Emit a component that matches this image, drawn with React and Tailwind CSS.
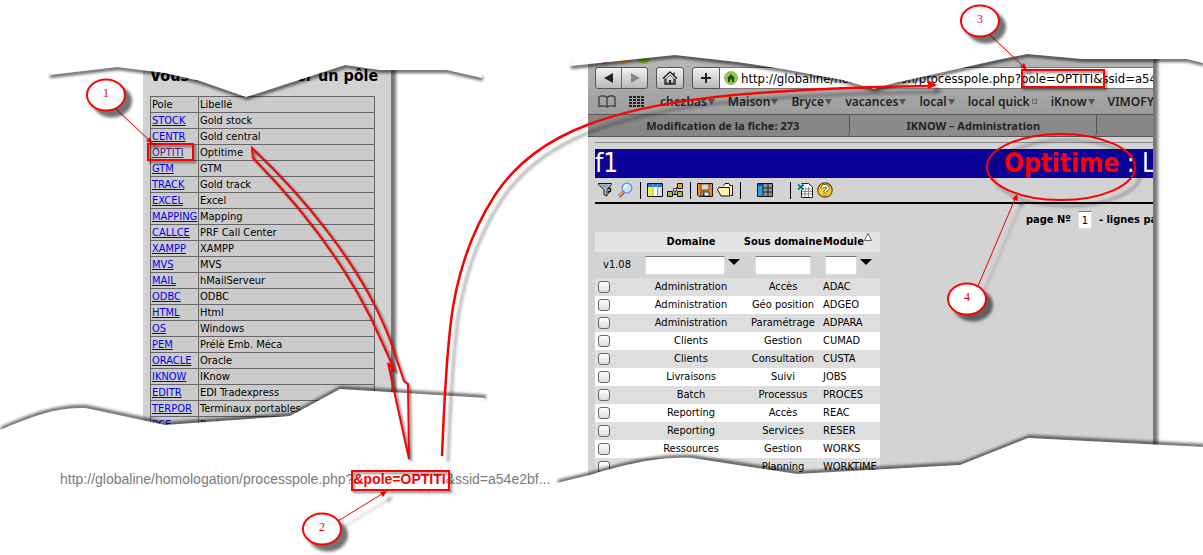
import React from 'react';

const poles = [
  ['STOCK', 'Gold stock'],
  ['CENTR', 'Gold central'],
  ['OPTITI', 'Optitime'],
  ['GTM', 'GTM'],
  ['TRACK', 'Gold track'],
  ['EXCEL', 'Excel'],
  ['MAPPING', 'Mapping'],
  ['CALLCE', 'PRF Call Center'],
  ['XAMPP', 'XAMPP'],
  ['MVS', 'MVS'],
  ['MAIL', 'hMailServeur'],
  ['ODBC', 'ODBC'],
  ['HTML', 'Html'],
  ['OS', 'Windows'],
  ['PEM', 'Prélè Emb. Méca'],
  ['ORACLE', 'Oracle'],
  ['IKNOW', 'IKnow'],
  ['EDITR', 'EDI Tradexpress'],
  ['TERPOR', 'Terminaux portables'],
  ['PCE', 'Projection'],
];

const modules = [
  ['Administration', 'Accès', 'ADAC'],
  ['Administration', 'Géo position', 'ADGEO'],
  ['Administration', 'Paramétrage', 'ADPARA'],
  ['Clients', 'Gestion', 'CUMAD'],
  ['Clients', 'Consultation', 'CUSTA'],
  ['Livraisons', 'Suivi', 'JOBS'],
  ['Batch', 'Processus', 'PROCES'],
  ['Reporting', 'Accès', 'REAC'],
  ['Reporting', 'Services', 'RESER'],
  ['Ressources', 'Gestion', 'WORKS'],
  ['Ressources', 'Planning', 'WORKTIME'],
];

const bookmarks = ['chezbas', 'Maison', 'Bryce', 'vacances', 'local', 'local quick', 'iKnow', 'VIMOFY'];

function PolePanel() {
  return (
    <section className="h-[380px] overflow-hidden bg-[#d2d2d2] px-[7px] shadow-[5px_5px_3px_#777] font-['DejaVu_Sans_Condensed','DejaVu_Sans',sans-serif]">
      <h1 className="pt-2 text-base leading-6 font-bold whitespace-nowrap text-black">Vous allez consulter un pôle</h1>
      <table className="mt-2 w-[225px] table-fixed border-collapse bg-[#cbcbcb] text-[11px] leading-[15px] text-black">
        <colgroup>
          <col className="w-12" />
          <col />
        </colgroup>
        <thead>
          <tr>
            <th className="border border-[#666] p-0 pl-px text-left font-normal">Pole</th>
            <th className="border border-[#666] p-0 pl-px text-left font-normal">Libellé</th>
          </tr>
        </thead>
        <tbody>
          {poles.map(([code, label]) => (
            <tr key={code}>
              <td className="border border-[#666] p-0 pl-px">
                <a href="#" className={code === 'OPTITI' ? 'text-[#551a8b] underline' : 'text-[#0000ee] underline'}>{code}</a>
              </td>
              <td className="border border-[#666] p-0 pl-px">{label}</td>
            </tr>
          ))}
        </tbody>
      </table>
    </section>
  );
}

function BrowserBar() {
  return (
    <header className="bg-gradient-to-b from-[#bcbcbc] to-[#929292] font-['Noto_Sans',sans-serif]">
      <div className="flex h-[19px] items-center gap-2 pl-[10px]">
        <i className="size-3 rounded-full bg-[#d9433b]" />
        <i className="size-3 rounded-full bg-[#e8a33d]" />
        <i className="size-3 rounded-full bg-[#7fb335]" />
      </div>
      <div className="flex h-[22px] pl-[7px]">
        <div className="flex w-[53px] rounded-[3px] border border-[#555] bg-gradient-to-b from-[#f4f4f4] to-[#b9b9b9]">
          <button aria-label="Précédent" className="flex flex-1 items-center justify-center border-r border-[#666]">
            <svg width="10" height="10" viewBox="0 0 10 10"><path d="M9 0v10L0 5z" fill="#222" /></svg>
          </button>
          <button aria-label="Suivant" className="flex flex-1 items-center justify-center">
            <svg width="10" height="10" viewBox="0 0 10 10"><path d="M1 0v10l9-5z" fill="#888" /></svg>
          </button>
        </div>
        <button aria-label="Accueil" className="ml-2 flex w-7 items-center justify-center rounded-[3px] border border-[#555] bg-gradient-to-b from-[#f4f4f4] to-[#b9b9b9]">
          <svg width="16" height="16" viewBox="0 0 16 16" fill="none" stroke="#222" strokeWidth="1.4">
            <path d="M1 8.5 8 2l7 6.500M3 8.500V14h10V8.500M12 5V2.500" />
            <path d="M8 5 4.500 8.500V13h7V8.500z" strokeWidth=".6" />
            <path d="M7 10h2v4H7z" fill="#222" stroke="none" />
          </svg>
        </button>
        <button aria-label="Ajouter" className="ml-2 flex w-7 items-center justify-center rounded-l-[3px] border border-[#555] bg-gradient-to-b from-[#f4f4f4] to-[#b9b9b9]">
          <svg width="12" height="12" viewBox="0 0 12 12"><path d="M1 6h10M6 1v10" stroke="#222" strokeWidth="2" /></svg>
        </button>
        <label className="flex min-w-0 flex-1 items-center border-y border-[#777] bg-white pl-1">
          <svg className="shrink-0" width="14" height="14" viewBox="0 0 14 14">
            <circle cx="7" cy="7" r="6.500" fill="#8fc84a" stroke="#6ba12c" strokeWidth=".6" />
            <path d="m3 7.200 4-4 4 4H10V11H8V8.500H6V11H4V7.200z" fill="#24460c" />
          </svg>
          <input
            aria-label="Adresse"
            className="ml-[3px] h-5 min-w-0 flex-1 bg-transparent text-[13px] text-black outline-none font-['DejaVu_Sans_Condensed','DejaVu_Sans',sans-serif]"
            defaultValue="http://globaline/homologation/processpole.php?pole=OPTITI&ssid=a54e2bf"
          />
        </label>
      </div>
      <nav className="flex h-[25px] items-center overflow-hidden pl-[10px] text-[12px] leading-[25px] font-semibold whitespace-nowrap text-[#222]">
        <svg className="mr-[13px] shrink-0" width="18" height="13" viewBox="0 0 18 13" fill="none" stroke="#333" strokeWidth="1.200">
          <path d="M9 12V2.500C7.500.500 3 .500 1 2v9.500c2-1 6.500-1 8 .500 1.500-1.500 6-1.500 8-.5V2c-2-1.500-6.500-1.500-8 .500" />
        </svg>
        <svg className="mr-[15px] shrink-0" width="16" height="12" viewBox="0 0 16 12" fill="#222">
          {[0, 3, 6, 9].map((y) => [0, 4, 8, 12].map((x) => <rect key={`${x}-${y}`} x={x} y={y} width="3" height="2" />))}
        </svg>
        <div className="flex gap-[13px]">
          {bookmarks.map((b) => (
            <a key={b} href="#" className="flex items-center gap-px">
              {b}
              {b === 'VIMOFY' ? null : b === 'local quick' ? (
                <svg width="7" height="7" viewBox="0 0 7 7"><path d="M1.500 1.500h4v4h-4z" fill="none" stroke="#666" /></svg>
              ) : (
                <svg width="7" height="6" viewBox="0 0 7 6"><path d="M0 0h7L3.500 6z" fill="#555" /></svg>
              )}
            </a>
          ))}
        </div>
      </nav>
      <nav className="flex h-[23px] border-y border-[#555] bg-[#868686] text-[11px] leading-[21px] font-bold whitespace-nowrap text-[#222]">
        <a href="#" className="flex-[258] rounded-br border-r border-[#555] pl-2 text-center">Modification de la fiche: 273</a>
        <a href="#" className="flex-[250] rounded-br border-r border-[#555] bg-[#8b8b8b] text-center">IKNOW – Administration</a>
        <span className="flex-[57]" />
      </nav>
    </header>
  );
}

function Tool({ label, children }) {
  return (
    <button aria-label={label} className="flex w-5 items-center justify-center">
      <svg width="16" height="16" viewBox="0 0 16 16">{children}</svg>
    </button>
  );
}

function Sep() {
  return (
    <span className="flex w-[10px] justify-center">
      <i className="h-[17px] w-px bg-black" />
    </span>
  );
}

function Toolbar() {
  return (
    <div className="flex h-[26px] items-center border-b-2 border-black">
      <Tool label="Filtre">
        <path d="M1.500 1.500h13v1L10 7.500V14l-3-1.500v-5l-5.500-5z" fill="#bcc6cf" stroke="#111" />
        <path d="M2.500 2.500h10L8.500 6z" fill="#8ba0b5" />
        <path d="M10.500 6.500h3v3h-2v2" fill="#ddd" stroke="#111" strokeWidth="1.300" />
      </Tool>
      <Tool label="Rechercher">
        <path d="m2 14.500 5-5" stroke="#8b542a" strokeWidth="3.600" />
        <path d="m1.800 14 5-5" stroke="#eda56a" strokeWidth="1.800" />
        <circle cx="10" cy="6" r="4.900" fill="#b8e6fb" stroke="#6d91c5" strokeWidth="1.300" />
        <path d="M7.500 6a3 3 0 0 1 3-2.800" stroke="#fff" strokeWidth="1.600" fill="none" />
      </Tool>
      <Sep />
      <Tool label="Colonnes">
        <path d="M.5 1.500h15v13H.5z" fill="#fff" stroke="#111" />
        <path d="M1 2h14v3H1z" fill="#2b7bc8" />
        <path d="M1 5h5v9H1z" fill="#ffec3a" />
        <path d="M11 5h4v9h-4z" fill="#cfe4ee" />
        <path d="M6 2v12M10.500 2v12" stroke="#8aa" />
      </Tool>
      <Tool label="Hiérarchie">
        <path d="M5 12.500h6M8 12.500V8l3-4" stroke="#111" fill="none" />
        <path d="M10.500 1.500h5v5h-5z" fill="#e6a327" stroke="#111" />
        <path d="M.5 9.500h5v5h-5zM10.500 9.500h5v5h-5z" fill="#a9bd45" stroke="#111" />
        <path d="M6.500 6.500h3v2.500h-3z" fill="#f4f4d0" stroke="#111" strokeWidth=".7" />
      </Tool>
      <Sep />
      <Tool label="Enregistrer">
        <path d="M.5 1.500h15v13H2l-1.500-1.500z" fill="#e58c1c" stroke="#111" />
        <path d="M4 2h8v6H4z" fill="#d9d3e8" stroke="#5a2b10" strokeWidth=".8" />
        <path d="M4 10h8v4H4z" fill="#eee" stroke="#111" strokeWidth=".8" />
        <path d="M5.500 10.500h2V14h-2z" fill="#333" />
      </Tool>
      <Tool label="Ouvrir">
        <path d="M6.500 3.500 8 1.500h4l1 2h2.500v10h-2" fill="#fff6c2" stroke="#111" />
        <path d="M.5 7.500 2 5.500h10.500v8.500H4z" fill="#fff2b0" stroke="#111" />
      </Tool>
      <Sep />
      <span className="w-[10px]" />
      <Tool label="Grille">
        <path d="M.5 1.500h15v13H.5z" fill="#8b9298" stroke="#111" />
        <path d="M1 2h5v12H1z" fill="#2da0e8" />
        <path d="M1 2h5v2H1z" fill="#0d5fae" />
        <path d="M6 2v12M11 2v12M6 6h9M6 10h9" stroke="#222" />
      </Tool>
      <span className="w-[10px]" />
      <Sep />
      <Tool label="Exporter">
        <path d="M4.500 1.500h7l4 3.500v10.500h-11z" fill="#fff" stroke="#222" />
        <path d="M5 7h10M5 9.500h10M5 12h10M8 5v10M11.500 5v10" stroke="#888" />
        <path d="M0 2h8v6H0z" fill="#d8f0f0" />
        <path d="m1 2.500 5.500 5M6.500 2.500l-5.500 5" stroke="#087680" strokeWidth="2" />
      </Tool>
      <Tool label="Aide">
        <circle cx="8" cy="8" r="7.200" fill="#ffd21c" stroke="#6b4300" strokeWidth="1.200" />
        <path d="M5 6.500C5 3 11 3 11 6.200 11 8.200 8 8 8 10.300" fill="none" stroke="#333" strokeWidth="3.200" />
        <path d="M5 6.500C5 3 11 3 11 6.200 11 8.200 8 8 8 10.300" fill="none" stroke="#fff" strokeWidth="1.800" />
        <circle cx="8" cy="12.500" r="1.300" fill="#fff" stroke="#333" strokeWidth=".6" />
      </Tool>
    </div>
  );
}

function FilterBox({ label, wide }) {
  return (
    <input
      aria-label={label}
      className={
        'h-[19px] border border-[#ddd] border-t-[#777] bg-white px-1 outline-none ' + wide
      }
    />
  );
}

function Caret() {
  return (
    <svg width="12" height="6" viewBox="0 0 12 6" className="mb-[6px]"><path d="M0 0h12L6 6z" fill="#000" /></svg>
  );
}

function ModuleTable() {
  return (
    <table className="w-[285px] table-fixed border-collapse text-center text-[11px] leading-[18px] text-black">
      <colgroup>
        <col className="w-11" />
        <col className="w-[104px]" />
        <col className="w-20" />
        <col className="w-[57px]" />
      </colgroup>
      <thead>
        <tr className="h-5 bg-[#e4e4e4] whitespace-nowrap">
          <th className="p-0" />
          <th className="p-0">Domaine</th>
          <th className="p-0">Sous domaine</th>
          <th className="p-0 text-left">
            <span className="flex">
              Module
              <svg width="8" height="8" viewBox="0 0 8 8"><path d="M.5 7.500h7L4 .500z" fill="#fff" stroke="#444" strokeWidth=".8" /></svg>
            </span>
          </th>
        </tr>
        <tr className="h-[26px]">
          <td className="p-0">v1.08</td>
          <td className="p-0"><span className="flex items-center gap-[3px] pl-[6px]"><FilterBox label="Filtre domaine" wide="w-20" /><Caret /></span></td>
          <td className="p-0"><span className="flex justify-center"><FilterBox label="Filtre sous domaine" wide="w-14" /></span></td>
          <td className="p-0"><span className="flex items-center gap-[3px] pl-[2px]"><FilterBox label="Filtre module" wide="w-8" /><Caret /></span></td>
        </tr>
      </thead>
      <tbody>
        {modules.map((m) => (
          <tr key={m[2]} className="h-[18px] odd:bg-[#dedede] even:bg-white">
            <td className="p-0">
              <input
                type="checkbox"
                aria-label={m[2]}
                className="ml-[3px] block size-3 appearance-none rounded-[3px] border border-[#666] bg-gradient-to-b from-[#fff] to-[#dcdcdc]"
              />
            </td>
            <td className="p-0">{m[0]}</td>
            <td className="p-0">{m[1]}</td>
            <td className="p-0 text-left">{m[2]}</td>
          </tr>
        ))}
      </tbody>
    </table>
  );
}

function BrowserPanel() {
  return (
    <section className="h-[440px] overflow-hidden bg-[#d3d3d3] shadow-[5px_5px_3px_#777]">
      <BrowserBar />
      <div className="pt-[5px] pl-[7px] font-['DejaVu_Sans_Condensed','DejaVu_Sans',sans-serif]">
        <hr className="border-t border-[#888]" />
        <div className="mt-[6px] flex h-[29px] justify-between overflow-hidden bg-[#0b0097] text-[26px] leading-[29px] whitespace-nowrap text-white">
          <span>f1</span>
          <h2 className="w-[149px]"><b className="text-[#f00]">Optitime</b> : Liste</h2>
        </div>
        <Toolbar />
        <div className="flex h-7 justify-end overflow-hidden pt-1 text-[11px] font-bold text-black">
          <label className="flex w-[127px] items-center whitespace-nowrap">
            page Nº
            <input className="mx-[7px] h-[18px] w-[14px] shrink-0 border border-t-[#777] border-[#ddd] bg-white text-center font-normal" defaultValue="1" />
            - lignes par page
          </label>
        </div>
        <ModuleTable />
      </div>
    </section>
  );
}

const tears = [
  { edge: 'M49 75 L117 67 L165 73 L200 81 L246 97 L345 65 L380 70 L447 70 L482 78', rest: ' Q475 20 420 20 L90 20 Z', dy: 1 },
  { edge: 'M570 66 L675 55 L737 62 L783 69 L843 80 L874 89 L890 84 L997 60 L1027 54 L1082 59 L1187 59 L1203 63', rest: ' V20 H610 Z', dy: 1 },
  { edge: 'M0 430 C30 417 55 407 85 408 L165 425 L290 416 L340 389 L485 398', rest: ' L450 450 H0 Z', dy: -1 },
  { edge: 'M557 483 L590 475 C640 460 665 457 692 458 L750 467 L797 474 L960 465 L1028 438 L1203 447', rest: ' V520 H570 Z', dy: -1 },
];

function TornPaper() {
  return (
    <svg className="pointer-events-none absolute top-0 left-0 z-10" width="1203" height="555" viewBox="0 0 1203 555" aria-hidden="true">
      <defs>
        <filter id="soft" x="-5%" y="-60%" width="110%" height="220%"><feGaussianBlur stdDeviation="1.500" /></filter>
      </defs>
      {tears.map((t) => (
        <g key={t.edge}>
          <path d={t.edge} transform={`translate(1 ${t.dy})`} fill="none" stroke="#000" strokeOpacity=".6" strokeWidth="4" filter="url(#soft)" />
          <path d={t.edge + t.rest} fill="#fff" />
        </g>
      ))}
    </svg>
  );
}

const callouts = [
  { n: 1, x: 106, y: 95, line: 'M116 109 L149 140', tip: 'M153 144 l-7 -3 l4 -4z' },
  { n: 2, x: 322, y: 529, line: 'M338 521 L382 494', tip: 'M387 491 l-4 6 l-3 -5z' },
  { n: 3, x: 980, y: 21, line: 'M990 35 L1023 66', tip: 'M1027 70 l-7 -3 l4 -4z' },
  { n: 4, x: 967, y: 299, line: 'M978 286 L1015 199', tip: 'M1017 194 l1 7 l-6 -2z' },
];

function Annotations() {
  return (
    <svg className="pointer-events-none absolute top-0 left-0 z-30" width="1203" height="555" viewBox="0 0 1203 555">
      <defs>
        <filter id="far" filterUnits="userSpaceOnUse" x="0" y="0" width="1203" height="555" colorInterpolationFilters="sRGB">
          <feDropShadow dx="6" dy="6" stdDeviation="1.500" floodColor="#000" floodOpacity=".35" />
        </filter>
        <filter id="deep" filterUnits="userSpaceOnUse" x="0" y="0" width="1203" height="555" colorInterpolationFilters="sRGB">
          <feDropShadow dx="6" dy="6" stdDeviation="1.500" floodColor="#000" floodOpacity=".55" />
        </filter>
        <filter id="near" filterUnits="userSpaceOnUse" x="0" y="0" width="1203" height="555" colorInterpolationFilters="sRGB">
          <feDropShadow dx="2" dy="2" stdDeviation="1.200" floodColor="#000" floodOpacity=".5" />
        </filter>
      </defs>
      <g fill="none" stroke="#f00" strokeWidth="2" filter="url(#near)">
        <path d="M252 148 C300 193 362 265 390 340 L404 381 L408 384 L409 459 L388 363 L395 371 L381 340 C350 268 300 206 253 158 Z" />
        <rect x="148" y="144" width="45" height="16" />
        <rect x="352" y="471" width="97" height="19" />
        <rect x="1022" y="70" width="82" height="17" />
      </g>
      <g filter="url(#far)">
        <path d="M442 456 C444 410 446 350 453 307 C460 265 475 226 495 195 C518 160 553 138 587 125 C650 101 737 89 930 86" fill="none" stroke="#f00" strokeWidth="2.500" />
        <path d="M937 85 l-9 -5 v9z" fill="#f00" />
        <ellipse cx="1061" cy="167" rx="74" ry="33" fill="none" stroke="#f00" strokeWidth="2" />
      </g>
      {callouts.map((c) => (
        <g key={c.n}>
          <g filter="url(#far)">
            <path d={c.line} stroke="#e00" strokeWidth="1" />
            <path d={c.tip} fill="#e00" />
          </g>
          <ellipse cx={c.x} cy={c.y} rx="19" ry="15.500" fill="#fff" stroke="#f00" strokeWidth="2" filter="url(#deep)" />
          <text x={c.x} y={c.y + 2} textAnchor="middle" className="fill-[#d00] font-['Liberation_Serif',serif] text-[12px]">{c.n}</text>
        </g>
      ))}
    </svg>
  );
}

export default function App() {
  return (
    <main className="relative flex min-h-screen items-start overflow-hidden bg-white">
      <div className="w-[588px] shrink-0 pt-14">
        <div className="mr-[197px] ml-[143px]">
          <PolePanel />
        </div>
        <p className="relative z-20 mt-[33px] ml-[60px] text-[14px] leading-5 whitespace-nowrap text-[#7b7b7b] font-['Liberation_Sans',Arial,sans-serif]">
          http://globaline/homologation/processpole.php?<b className="text-[#f00]">&amp;pole=OPTITI</b>&amp;ssid=a54e2bf...
        </p>
      </div>
      <div className="mr-[50px] min-w-0 flex-1 pt-12">
        <BrowserPanel />
      </div>
      <TornPaper />
      <Annotations />
    </main>
  );
}
